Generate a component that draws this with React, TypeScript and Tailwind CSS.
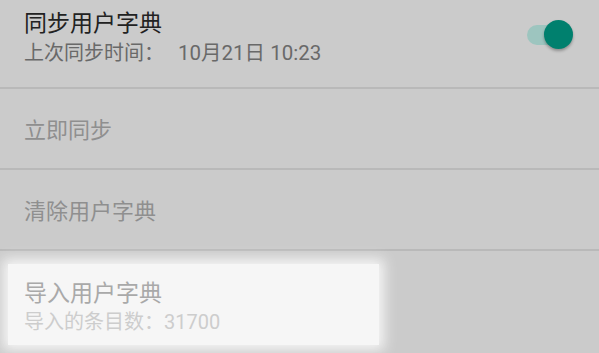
import React from "react";

const font = { fontFamily: "Roboto, 'Noto Sans CJK SC', 'Noto Sans', sans-serif" };

function Divider() {
  return <div className="h-[2px] bg-[#b9b9b9]" />;
}

export default function App() {
  return (
    <div
      className="w-[599px] h-[353px] overflow-hidden bg-[#cbcbcb] flex flex-col"
      style={font}
    >
      {/* Row 1 */}
      <div className="h-[87px] flex items-start justify-between pl-[24px] pr-[26px]">
        <div className="flex flex-col pt-[9px]">
          <div className="text-[23px] leading-[30px] text-[#222222]">同步用户字典</div>
          <div className="text-[20px] leading-[26px] text-[#696969] mt-[1px] whitespace-pre">
            上次同步时间：<span className="ml-[14px] text-[20.5px]">10月21日 10:23</span>
          </div>
        </div>
        <div className="relative w-[46px] h-[29px] mt-[20px]">
          <div className="absolute left-0 top-[5px] w-[40px] h-[20px] rounded-full bg-[#9dc5bf]" />
          <div className="absolute right-0 top-0 w-[29px] h-[29px] rounded-full bg-[#00806e] shadow-[0_2px_3px_rgba(0,0,0,0.3)]" />
        </div>
      </div>
      <Divider />
      {/* Row 2 */}
      <div className="h-[79px] flex items-center pl-[24px] pt-[5px]">
        <div className="text-[22px] leading-[30px] text-[#8f8f8f]">立即同步</div>
      </div>
      <Divider />
      {/* Row 3 */}
      <div className="h-[79px] flex items-center pl-[24px] pt-[5px]">
        <div className="text-[22px] leading-[30px] text-[#8f8f8f]">清除用户字典</div>
      </div>
      <Divider />
      {/* Row 4 */}
      <div className="flex-1 pt-[13px] pl-[8px]">
        <div className="w-[371px] h-[81px] bg-[#f6f6f6] shadow-[0_0_12px_5px_#f6f6f6] pl-[16px] pt-[15px] flex flex-col">
          <div className="text-[23px] leading-[30px] text-[#a9a9a9]">导入用户字典</div>
          <div className="text-[20px] leading-[26px] text-[#cdcdcd]">导入的条目数：31700</div>
        </div>
      </div>
    </div>
  );
}
